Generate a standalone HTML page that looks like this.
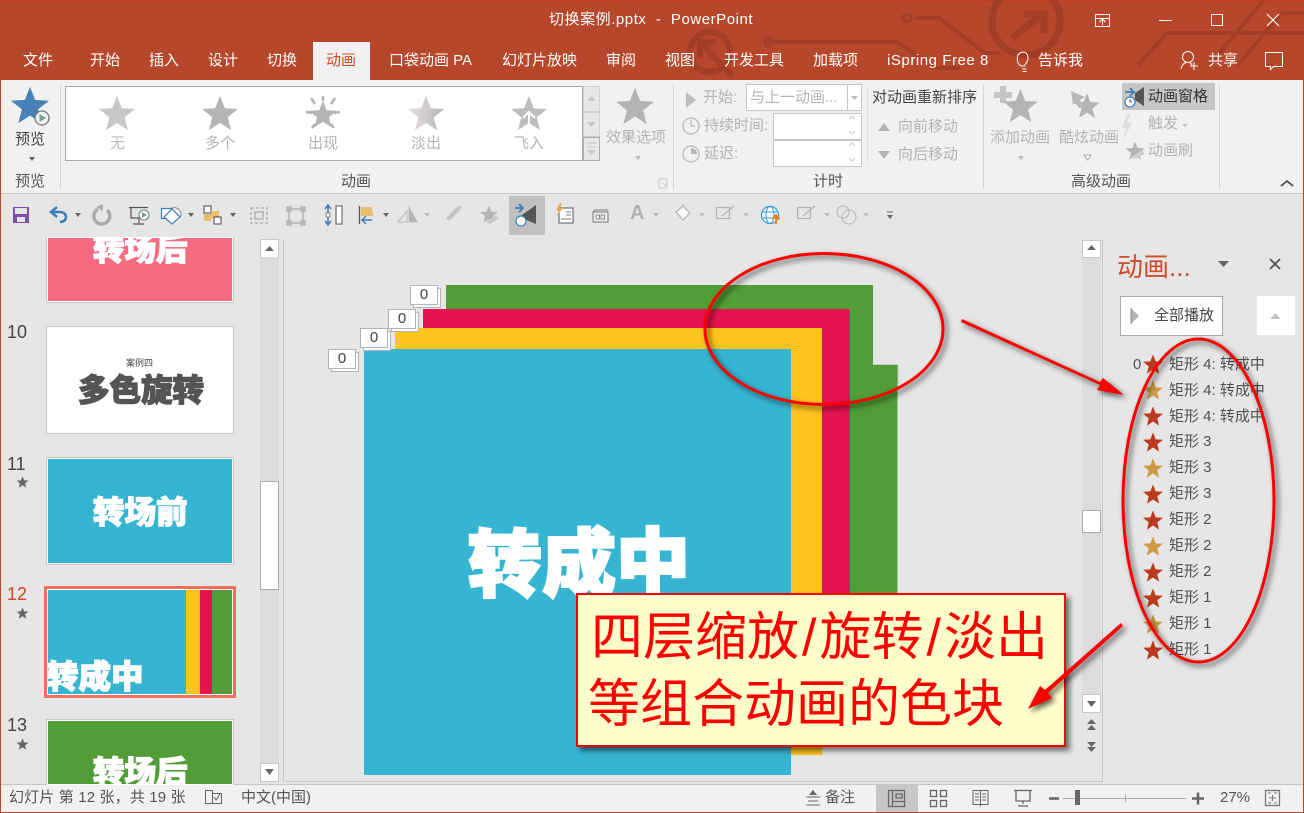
<!DOCTYPE html>
<html lang="zh"><head><meta charset="utf-8"><title>切换案例.pptx - PowerPoint</title>
<style>
html,body{margin:0;padding:0;width:1304px;height:813px;overflow:hidden;background:#E6E6E6}
body{position:relative;font-family:"Liberation Sans","Noto Sans CJK SC",sans-serif;color:#444}
.a{position:absolute}
.t{position:absolute;white-space:nowrap;line-height:20px;height:20px;font-size:15px;margin-top:1px}
.w{color:#fff}.g{color:#b3b3b3}.d{color:#555}
.h{position:absolute;white-space:nowrap;font-weight:900;text-align:center;-webkit-text-stroke:1.2px currentColor;color:#fff;font-size:31.500px;line-height:36px;height:36px;letter-spacing:0}
.th{position:absolute;box-sizing:border-box;left:46px;width:188px;border:1px solid #C6C6C6;overflow:hidden}
.num{position:absolute;left:7px;font-size:18px;line-height:20px;color:#444}
.zero{position:absolute;box-sizing:border-box;width:28px;height:20px;background:#fff;border:1px solid #B4B4B4;font-size:15px;line-height:17px;text-align:center;color:#444;box-shadow:3px 3px 0 -1px #fff,3px 3px 0 0 #B4B4B4}
.li{position:absolute;left:1169px;font-size:15px;line-height:20px;height:20px;color:#505050;white-space:nowrap;margin-top:1px}
.sl{margin:0 3px}
svg{position:absolute;left:0;top:0}
</style></head><body>
<!-- backgrounds -->
<div class="a" style="left:0;top:0;width:1304px;height:80px;background:#B7472A;border-top:1px solid #C8391A;box-sizing:border-box"></div>
<div class="a" style="left:0;top:80px;width:1304px;height:113px;background:#F1F1F1"></div>
<div class="a" style="left:0;top:193px;width:1304px;height:1px;background:#C6C6C6"></div>
<div class="a" style="left:313px;top:42px;width:57px;height:38px;background:#F1F1F1"></div>
<div class="a" style="left:65px;top:86px;width:518px;height:75px;box-sizing:border-box;background:#fff;border:1px solid #ABADB3"></div>
<div class="a" style="left:583px;top:86px;width:17px;height:26px;box-sizing:border-box;background:#E8E8E8;border:1px solid #D0D0D0"></div>
<div class="a" style="left:583px;top:112px;width:17px;height:25px;box-sizing:border-box;background:#E8E8E8;border:1px solid #D0D0D0"></div>
<div class="a" style="left:583px;top:137px;width:17px;height:24px;box-sizing:border-box;background:#E8E8E8;border:1px solid #ABADB3"></div>
<div class="a" style="left:746px;top:84px;width:116px;height:27px;box-sizing:border-box;background:#fff;border:1px solid #C6C6C6"></div>
<div class="a" style="left:847px;top:84px;width:1px;height:27px;background:#C6C6C6"></div>
<div class="a" style="left:773px;top:113px;width:89px;height:27px;box-sizing:border-box;background:#fff;border:1px solid #C6C6C6"></div>
<div class="a" style="left:773px;top:140px;width:89px;height:27px;box-sizing:border-box;background:#fff;border:1px solid #C6C6C6"></div>
<div class="a" style="left:1122px;top:83px;width:93px;height:27px;background:#C6C6C6"></div>
<div class="a" style="left:509px;top:196px;width:36px;height:39px;background:#C0C0C0"></div>
<div class="a" style="left:60px;top:84px;width:1px;height:105px;background:#D4D4D4"></div>
<div class="a" style="left:673px;top:84px;width:1px;height:105px;background:#D4D4D4"></div>
<div class="a" style="left:867px;top:88px;width:1px;height:74px;background:#DDD"></div>
<div class="a" style="left:983px;top:84px;width:1px;height:105px;background:#D4D4D4"></div>
<div class="a" style="left:1219px;top:84px;width:1px;height:105px;background:#D4D4D4"></div>
<!-- status bar -->
<div class="a" style="left:0;top:784px;width:1304px;height:1px;background:#C6C6C6"></div>
<div class="a" style="left:0;top:785px;width:1304px;height:27px;background:#F1F1F1"></div>
<div class="a" style="left:876px;top:785px;width:42px;height:27px;background:#C6C6C6"></div>
<div class="a" style="left:0;top:812px;width:1304px;height:1px;background:#B7472A"></div>
<div class="a" style="left:0;top:0;width:1px;height:813px;background:#B7472A"></div>
<div class="a" style="left:1303px;top:0;width:1px;height:813px;background:#B7472A"></div>

<!-- base svg icons -->
<svg width="1304" height="813" viewBox="0 0 1304 813">
<defs>
<symbol id="s" viewBox="0 0 24 24"><polygon points="12,0.5 15.2,8.8 24,9.3 17.1,14.8 19.4,23.5 12,18.6 4.6,23.5 6.9,14.8 0,9.3 8.8,8.8"/></symbol>
<linearGradient id="fade" x1="0" x2="1"><stop offset="0" stop-color="#E4DEDE"/><stop offset=".55" stop-color="#CFCACC"/><stop offset="1" stop-color="#B0B0B0"/></linearGradient>
</defs>
<!-- title-bar pattern -->
<g fill="none" stroke="#A23E25" stroke-width="7">
<circle cx="1026" cy="21" r="34"/>
<path d="M1012 38L1041 15M1024 14H1044V33" stroke-width="7"/>
<circle cx="710" cy="52" r="20" stroke-width="6"/>
<path d="M732 76L703 45M700 58V42H716" stroke-width="6"/>
<path d="M915 18H939L985 53H1000M768 42H897L935 68H960" stroke-width="4"/>
<circle cx="907" cy="18" r="4" stroke-width="3"/><circle cx="769" cy="42" r="4" stroke-width="3"/>
<path d="M1138 65L1167 33H1304M1209 65L1264 0M1238 65L1282 13H1304" stroke-width="4"/>
</g>
<!-- window controls -->
<g fill="none" stroke="#fff" stroke-width="1">
<path d="M1095.500 14.500h14v12h-14zM1095 18.500h15M1102.500 25v-6M1099.500 22l3-3 3 3"/>
<path d="M1159 20.500h13M1211.500 14.500h11v11h-11zM1267 14l12 12M1279 14l-12 12"/>
<path d="M1024.500 63c-5-3-5-12 0-13.500s7 2 7 6-3 5-3.500 7.500h-3.500zM1026 66h4M1026 68.500h4" transform="translate(-3.500 3) "/>
<circle cx="1188" cy="57" r="5.500"/><path d="M1181 69c1-4 3-6 5-6.500M1190 63c1 .5 1.500 1 2 2M1190 66h8M1194 62v8" />
<path d="M1265.500 52.500h17v14h-9l-3 3v-3h-5z"/>
</g>
<!-- preview -->
<use href="#s" x="11" y="86" width="38" height="38" fill="#4A80B8"/>
<circle cx="42" cy="118" r="7" fill="#F1F1F1" stroke="#777" stroke-width="1.300"/><polygon points="39.500,114 46,118 39.500,122" fill="#6FA58C"/>
<polygon points="29,157 35,157 32,161" fill="#666"/>
<!-- gallery -->
<use href="#s" x="99" y="95" width="36" height="36" fill="#C8C8C8"/>
<use href="#s" x="202" y="95" width="36" height="36" fill="#B4B4B4"/>
<use href="#s" x="309" y="100" width="28" height="28" fill="#B4B4B4"/>
<path d="M323 96v5M311 98l4 6M335 98l-4 6M306 112l6 1M340 112l-6 1M312 128l3-4M334 128l-3-4" stroke="#B4B4B4" stroke-width="2.500" fill="none"/>
<use href="#s" x="408" y="95" width="36" height="36" fill="url(#fade)"/>
<use href="#s" x="511" y="95" width="36" height="36" fill="#BDBDBD"/>
<path d="M529 131v-19M523 118l6-6 6 6M524 132v-6M534 132v-6" stroke="#fff" stroke-width="2" fill="none"/>
<polygon points="587,101 596,101 591.500,96" fill="#C6C6C6"/><polygon points="587,122 596,122 591.500,127" fill="#C6C6C6"/>
<path d="M587 143h9M587 147h9" stroke="#C6C6C6"/><polygon points="587,150 596,150 591.500,155" fill="#C6C6C6"/>
<use href="#s" x="616" y="87" width="38" height="38" fill="#B4B4B4"/>
<polygon points="635,156 641,156 638,160" fill="#bbb"/>
<!-- timing -->
<polygon points="686,92 696,100 686,108" fill="#BDBDBD"/>
<polygon points="851,96 858,96 854.500,100" fill="#bbb"/>
<g fill="none" stroke="#B8B8B8" stroke-width="1.300"><circle cx="691" cy="126" r="8"/><path d="M691 120v6h4"/><circle cx="691" cy="154" r="8"/></g>
<path d="M691 154v-6a6 6 0 0 1 6 6z" fill="#B8B8B8"/>
<path d="M849 119l3-3 3 3M849 131l3 3 3-3M849 146l3-3 3 3M849 158l3 3 3-3" fill="none" stroke="#ccc"/>
<polygon points="878,131 890,131 884,123" fill="#B4B4B4"/><polygon points="878,151 890,151 884,159" fill="#B4B4B4"/>
<path d="M659 179h8v8M659 180v8h8M663 183l4 4" fill="none" stroke="#C4C4C4"/>
<!-- advanced -->
<path d="M1000 86h6v6h6v6h-6v5h-6v-5h-6v-6h6z" fill="#C6C6C6"/>
<use href="#s" x="1003" y="88" width="35" height="35" fill="#B4B4B4"/>
<use href="#s" x="1074" y="91" width="26" height="29" fill="#B4B4B4"/>
<polygon points="1071,91 1085,97 1080,100 1083,107 1079,108 1076,102 1073,105" fill="#B8B8B8"/>
<polygon points="1018,156 1024,156 1021,160" fill="#bbb"/>
<polygon points="1084,155 1091,155 1087.500,160" fill="#fff" stroke="#999" stroke-width=".8"/>
<path d="M1127 114l-5 14h4l-3 12 9-17h-5l4-9z" fill="#DEDEDE"/>
<polygon points="1182,124 1188,124 1185,127" fill="#bbb"/>
<use href="#s" x="1125" y="141" width="20" height="19" fill="#B4B4B4"/>
<path d="M1130 158l12-8 3 4-11 5z" fill="#D0D0D0"/>
<path d="M1281 186l6-5 6 5" fill="none" stroke="#555" stroke-width="1.800"/>
<!-- anim pane icon ribbon -->
<polygon points="1135,93 1144,87 1144,106 1135,100" fill="#555"/>
<path d="M1125 92h8M1130 88l4 4-4 4" stroke="#3F7CB8" stroke-width="1.800" fill="none"/>
<circle cx="1130" cy="102" r="5" fill="#fff" stroke="#3F7CB8" stroke-width="1.200"/><path d="M1130 99v3h2" stroke="#333" fill="none" stroke-width=".8"/>
<!-- toolbar -->
<rect x="13" y="207" width="16" height="16" fill="#7B50A8"/><rect x="15" y="208" width="12" height="6" fill="#E6E6E6"/><rect x="17" y="217" width="8" height="5" fill="#E6E6E6"/>
<path d="M51 212H60C68 212 68 222 60 222M57 207l-6 5 6 5" fill="none" stroke="#3F7CB8" stroke-width="2.500"/>
<g fill="#666"><polygon points="75,213 81,213 78,217"/><polygon points="188,213 194,213 191,217"/><polygon points="230,213 236,213 233,217"/><polygon points="383,213 389,213 386,217"/></g>
<g fill="#bbb"><polygon points="424,213 430,213 427,217"/><polygon points="653,213 659,213 656,217"/><polygon points="699,213 705,213 702,217"/><polygon points="743,213 749,213 746,217"/><polygon points="824,213 830,213 827,217"/><polygon points="863,213 869,213 866,217"/></g>
<path d="M98 209A8 8 0 1 0 107 210" fill="none" stroke="#ABABAB" stroke-width="3.500"/><polygon points="96,207 103,204 103,211" fill="#ABABAB"/>
<path d="M129 207.500h19M131 208v10h14M139 218v5M133 224h11" fill="none" stroke="#555" stroke-width="1.200"/><circle cx="144" cy="215" r="5" fill="#fff" stroke="#777"/><polygon points="142,212 147,215 142,218" fill="#6FA58C"/>
<rect x="161.500" y="208.500" width="11" height="10" fill="#fff" stroke="#3F7CB8" stroke-width="1.200"/>
<path d="M172 208a7 7 0 0 1 9 8l-4 1z" fill="#F1F1F1" stroke="#888"/>
<path d="M172 209l8 8-8 7-8-7z" fill="#fff" stroke="#3F7CB8" stroke-width="1.200"/>
<rect x="204" y="206" width="7" height="7" fill="#fff" stroke="#444"/><rect x="211" y="211" width="8" height="7" fill="#E9BD6E"/><rect x="204" y="214" width="7" height="7" fill="#E9BD6E"/><rect x="214" y="217" width="7" height="7" fill="#fff" stroke="#444"/>
<g fill="none" stroke="#B4B4B4" stroke-width="1.500"><rect x="251" y="208" width="16" height="15" stroke-dasharray="3 2"/><rect x="255" y="212" width="8" height="7"/></g>
<g fill="none" stroke="#B4B4B4" stroke-width="1.500"><rect x="289" y="209" width="14" height="14"/><rect x="287" y="207" width="4" height="4" fill="#B4B4B4"/><rect x="301" y="207" width="4" height="4" fill="#B4B4B4"/><rect x="287" y="221" width="4" height="4" fill="#B4B4B4"/><rect x="301" y="221" width="4" height="4" fill="#B4B4B4"/></g>
<rect x="336" y="206" width="6" height="18" fill="#fff" stroke="#555"/><path d="M328 206v18M325 209l3-4 3 4M325 221l3 4 3-4" stroke="#3F7CB8" stroke-width="1.500" fill="none"/><rect x="326" y="213" width="4" height="4" fill="#fff" stroke="#555" stroke-width=".7"/>
<path d="M359.500 206v18" stroke="#555" stroke-width="1.300"/><rect x="361" y="207" width="11" height="7" fill="#E9BD6E"/><rect x="361" y="211" width="12" height="5" fill="#E9BD6E"/><path d="M372 220h-10M366 216l-4 4 4 4" stroke="#3F7CB8" stroke-width="1.500" fill="none"/>
<path d="M398 222l9-11v11zM409 207v15h8z" fill="none" stroke="#bbb"/><polygon points="409,208 417,222 409,222" fill="#B4B4B4"/>
<path d="M446 218l10-10 3 3-10 10zM456 208l4-3 2 2-3 4" fill="#C4C4C4"/>
<use href="#s" x="480" y="205" width="18" height="18" fill="#B4B4B4"/><path d="M486 222l10-7 3 3-9 6z" fill="#C8C8C8"/>
<polygon points="522,215 536,205 536,224 522,218" fill="#555"/>
<path d="M515 208h8M519 204l4 4-4 4" stroke="#3F7CB8" stroke-width="1.800" fill="none"/>
<circle cx="521" cy="221" r="5" fill="#fff" stroke="#3F7CB8" stroke-width="1.200"/>
<rect x="559" y="208" width="14" height="15" fill="#fff" stroke="#555"/><path d="M566 212h5M566 215h5M561 219h10" stroke="#777"/><path d="M560 203l-4 7h3l-2 6 6-8h-3l2-5z" fill="#E9A94A"/>
<path d="M593 212h15v10h-15zM593 212l2-2h13" fill="#EEE" stroke="#777"/><rect x="596" y="215" width="3.500" height="4" fill="none" stroke="#777" stroke-width=".8"/><rect x="601" y="215" width="3.500" height="4" fill="none" stroke="#777" stroke-width=".8"/>
<path d="M676 212l7-6 7 7-7 7zM683 206v-2" fill="#F6F6F6" stroke="#aaa"/>
<path d="M716.500 207.500h13v11h-13z M722 216l12-10" fill="none" stroke="#B4B4B4" stroke-width="1.300"/>
<circle cx="770" cy="215" r="8.500" fill="#fff" stroke="#2F9BD8" stroke-width="1.200"/><ellipse cx="770" cy="215" rx="4" ry="8.500" fill="none" stroke="#2F9BD8"/><path d="M762 212h16M762 218h16" stroke="#2F9BD8"/><path d="M776 224v-8M772.500 219l3.500-4 3.500 4" stroke="#F08020" stroke-width="2" fill="none"/>
<path d="M797.500 207.500h13v11h-13z M803 216l12-10" fill="none" stroke="#B4B4B4" stroke-width="1.300"/>
<circle cx="843" cy="212" r="6" fill="none" stroke="#B4B4B4"/><circle cx="849" cy="217" r="7" fill="none" stroke="#B4B4B4"/>
<path d="M887 212h6" stroke="#666"/><polygon points="887,215 893,215 890,219" fill="#666"/>
<!-- left scrollbar + slide frame -->
<rect x="260" y="240" width="19" height="541" fill="#DCDCDC"/>
<rect x="260.500" y="239.500" width="18" height="18.500" fill="#fff" stroke="#C6C6C6"/>
<polygon points="265,251 274,251 269.500,246" fill="#666"/>
<rect x="260.500" y="481.500" width="18" height="108" fill="#fff" stroke="#ABABAB"/>
<rect x="260.500" y="763.500" width="18" height="18" fill="#fff" stroke="#C6C6C6"/>
<polygon points="265,769 274,769 269.500,775" fill="#666"/>
<path d="M283.500 239V782M286 781.500H1102.500V240" fill="none" stroke="#C6C6C6"/>
<!-- right scrollbar -->
<rect x="1082" y="240" width="19" height="472" fill="#DCDCDC"/>
<rect x="1082.500" y="240.500" width="18" height="17" fill="#fff" stroke="#C6C6C6"/>
<polygon points="1087,250 1096,250 1091.500,245" fill="#666"/>
<rect x="1082.500" y="510.500" width="18" height="22" fill="#fff" stroke="#ABABAB"/>
<rect x="1082.500" y="694.500" width="18" height="18" fill="#fff" stroke="#C6C6C6"/>
<polygon points="1087,701 1096,701 1091.500,707" fill="#666"/>
<g fill="#666"><polygon points="1087,724 1096,724 1091.500,719"/><polygon points="1087,730 1096,730 1091.500,725"/><polygon points="1087,742 1096,742 1091.500,747"/><polygon points="1087,747 1096,747 1091.500,752"/></g>
<!-- slide -->
<rect x="446" y="285" width="427" height="80" fill="#529D37"/>
<rect x="800" y="365" width="97.500" height="382" fill="#529D37"/>
<path d="M873 364.500h25v20" stroke="#C8C8C8" fill="none"/>
<rect x="423" y="309" width="427" height="438" fill="#E61351"/>
<rect x="395" y="328" width="427" height="427" fill="#FEC41E"/>
<rect x="364" y="349" width="427" height="426" fill="#36B5D3"/>
<!-- panel -->
<polygon points="1218,261 1229,261 1223.500,267" fill="#666"/>
<path d="M1270 259l10 10M1280 259l-10 10" stroke="#555" stroke-width="1.800"/>
<rect x="1120.500" y="296.500" width="102" height="39" fill="#fff" stroke="#ABABAB"/>
<polygon points="1131,308 1139,316 1131,324" fill="#B4B4B4"/><path d="M1131 308v16" stroke="#888"/>
<rect x="1257" y="296" width="38" height="39" fill="#fff"/>
<polygon points="1270,319 1281,319 1275.500,313" fill="#C6C6C6"/>
<g>
<use href="#s" x="1143" y="354" width="20" height="20" fill="#B93A1C"/>
<use href="#s" x="1143" y="380" width="20" height="20" fill="#D09A45"/>
<use href="#s" x="1143" y="406" width="20" height="20" fill="#B93A1C"/>
<use href="#s" x="1143" y="432" width="20" height="20" fill="#B93A1C"/>
<use href="#s" x="1143" y="458" width="20" height="20" fill="#D09A45"/>
<use href="#s" x="1143" y="484" width="20" height="20" fill="#B93A1C"/>
<use href="#s" x="1143" y="510" width="20" height="20" fill="#B93A1C"/>
<use href="#s" x="1143" y="536" width="20" height="20" fill="#D09A45"/>
<use href="#s" x="1143" y="562" width="20" height="20" fill="#B93A1C"/>
<use href="#s" x="1143" y="588" width="20" height="20" fill="#B93A1C"/>
<use href="#s" x="1143" y="614" width="20" height="20" fill="#D09A45"/>
<use href="#s" x="1143" y="640" width="20" height="20" fill="#B93A1C"/>
</g>
<!-- status icons -->
<path d="M205.500 790.500h7v13h-7zM212.500 793.500h9v10h-9M214 797l2 3 4-6" fill="none" stroke="#666"/>
<path d="M806 798h14M808 802h10M806 806h14" stroke="#666" fill="none" transform="translate(0 -1)"/><polygon points="809,795 817,795 813,790" fill="#666"/>
<g fill="none" stroke="#666" stroke-width="1.300">
<rect x="888.500" y="790.500" width="16" height="16"/><path d="M892.500 790.500v16M892.500 801.500h12M896 794h6v4h-6z"/>
<rect x="930.500" y="790.500" width="6" height="6"/><rect x="940.500" y="790.500" width="6" height="6"/><rect x="930.500" y="800.500" width="6" height="6"/><rect x="940.500" y="800.500" width="6" height="6"/>
<path d="M973 790.500h15v14h-15zM980.500 790.500v16M975 794h4M975 797h4M975 800h4M982 794h4M982 797h4M982 800h4" stroke-width="1"/>
<path d="M1014 790.500h18M1016 791v10h14v-10M1023 801v3M1018 806h10" />
<rect x="1265.500" y="790.500" width="14" height="15" stroke="#777"/>
</g>
<path d="M1268 793h3M1277 793h-3M1268 803h3M1277 803h-3M1272.500 795v6M1269 798h7" stroke="#777" fill="none"/>
<path d="M1049 798.500h10" stroke="#666" stroke-width="2.500"/>
<path d="M1063 798.500h123M1125.500 795v7" stroke="#A8A8A8" fill="none"/>
<rect x="1075" y="790" width="5" height="15" fill="#666"/>
<path d="M1192 798.500h12M1198 792.500v12" stroke="#666" stroke-width="2.500"/>
</svg>

<!-- title + tabs -->
<div class="t w" style="left:549px;top:9px;letter-spacing:.55px">切换案例.pptx&nbsp; -&nbsp; PowerPoint</div>
<div class="t w" style="left:23px;top:50px">文件</div>
<div class="t w" style="left:90px;top:50px">开始</div>
<div class="t w" style="left:149px;top:50px">插入</div>
<div class="t w" style="left:208px;top:50px">设计</div>
<div class="t w" style="left:267px;top:50px">切换</div>
<div class="t" style="left:326px;top:50px;color:#D24726">动画</div>
<div class="t w" style="left:389px;top:50px">口袋动画 PA</div>
<div class="t w" style="left:502px;top:50px">幻灯片放映</div>
<div class="t w" style="left:606px;top:50px">审阅</div>
<div class="t w" style="left:665px;top:50px">视图</div>
<div class="t w" style="left:724px;top:50px">开发工具</div>
<div class="t w" style="left:813px;top:50px">加载项</div>
<div class="t w" style="left:887px;top:50px;letter-spacing:.55px">iSpring Free 8</div>
<div class="t w" style="left:1038px;top:50px">告诉我</div>
<div class="t w" style="left:1208px;top:50px">共享</div>

<!-- ribbon text -->
<div class="t" style="left:15px;top:129px;color:#444">预览</div>
<div class="t d" style="left:15px;top:171px">预览</div>
<div class="t" style="left:110px;top:133px;color:#bdbdbd">无</div>
<div class="t g" style="left:205px;top:133px">多个</div>
<div class="t g" style="left:308px;top:133px">出现</div>
<div class="t g" style="left:411px;top:133px">淡出</div>
<div class="t g" style="left:514px;top:133px">飞入</div>
<div class="t g" style="left:606px;top:127px">效果选项</div>
<div class="t d" style="left:341px;top:171px">动画</div>
<div class="t g" style="left:703px;top:87px">开始:</div>
<div class="t g" style="left:750px;top:87px">与上一动画...</div>
<div class="t g" style="left:704px;top:115px">持续时间:</div>
<div class="t g" style="left:704px;top:143px">延迟:</div>
<div class="t" style="left:872px;top:87px;color:#444">对动画重新排序</div>
<div class="t g" style="left:898px;top:116px">向前移动</div>
<div class="t g" style="left:898px;top:144px">向后移动</div>
<div class="t d" style="left:813px;top:171px">计时</div>
<div class="t g" style="left:990px;top:127px">添加动画</div>
<div class="t g" style="left:1059px;top:127px">酷炫动画</div>
<div class="t" style="left:1148px;top:86px;color:#333">动画窗格</div>
<div class="t g" style="left:1148px;top:113px">触发</div>
<div class="t g" style="left:1148px;top:140px">动画刷</div>
<div class="t d" style="left:1071px;top:171px">高级动画</div>
<div class="a" style="left:630px;top:202px;font-size:20px;line-height:22px;color:#B0B0B0;font-weight:700">A</div>

<!-- thumbnails -->
<div class="th" style="top:237px;height:66px;border-top:0;background:#F56B80;box-shadow:inset 0 0 0 1px #fff"><div class="h" style="left:46px;top:-6px">转场后</div></div>
<div class="num" style="top:322px">10</div>
<div class="th" style="top:326px;height:108px;background:#fff">
 <div class="t" style="left:79px;top:25px;font-size:9px;color:#444">案例四</div>
 <div class="h" style="left:31px;top:45px;color:#555;-webkit-text-stroke-color:#555">多色旋转</div>
</div>
<div class="num" style="top:454px">11</div>
<div class="th" style="top:457px;height:108px;background:#36B5D3;box-shadow:inset 0 0 0 1px #fff"><div class="h" style="left:46px;top:36px">转场前</div></div>
<div class="num" style="top:584px;color:#D24726">12</div>
<div class="a" style="left:44px;top:586px;width:192px;height:112px;box-sizing:border-box;background:#F1705A"></div>
<div class="a" style="left:47px;top:589px;width:186px;height:106px;background:#fff;overflow:hidden">
 <div class="a" style="left:1px;top:1px;width:184px;height:104px;background:#36B5D3;overflow:hidden">
  <div class="a" style="left:138px;top:0;width:14px;height:104px;background:#FEC41E"></div>
  <div class="a" style="left:152px;top:0;width:12px;height:104px;background:#E61351"></div>
  <div class="a" style="left:164px;top:0;width:20px;height:104px;background:#529D37"></div>
  <div class="h" style="left:-2px;top:69px;font-size:32.500px">转成中</div>
 </div>
</div>
<div class="num" style="top:715px">13</div>
<div class="th" style="top:719px;height:66px;border-bottom:0;background:#529D37;box-shadow:inset 0 0 0 1px #fff"><div class="h" style="left:46px;top:34px">转场后</div></div>
<svg width="40" height="813" viewBox="0 0 40 813" style="width:40px">
<use href="#s" x="16" y="476" width="13" height="12" fill="#666"/>
<use href="#s" x="16" y="607" width="13" height="12" fill="#666"/>
<use href="#s" x="16" y="738" width="13" height="12" fill="#666"/>
</svg>

<!-- slide content -->
<div class="h" style="left:468px;top:517px;font-size:74px;line-height:96px;height:96px;-webkit-text-stroke-width:2.500px;width:222px;transform:rotate(-0.5deg)">转成中</div>
<div class="zero" style="left:410px;top:285px">0</div>
<div class="zero" style="left:388px;top:309px">0</div>
<div class="zero" style="left:360px;top:328px">0</div>
<div class="zero" style="left:328px;top:349px">0</div>

<!-- panel text -->
<div class="a" style="left:1117px;top:250px;font-size:26px;line-height:34px;color:#CF4B2B;white-space:nowrap">动画...</div>
<div class="t" style="left:1154px;top:305px;color:#444">全部播放</div>
<div class="t d" style="left:1133px;top:354px">0</div>
<div class="li" style="top:354px">矩形 4: 转成中</div>
<div class="li" style="top:380px">矩形 4: 转成中</div>
<div class="li" style="top:406px">矩形 4: 转成中</div>
<div class="li" style="top:431px">矩形 3</div>
<div class="li" style="top:457px">矩形 3</div>
<div class="li" style="top:483px">矩形 3</div>
<div class="li" style="top:509px">矩形 2</div>
<div class="li" style="top:535px">矩形 2</div>
<div class="li" style="top:561px">矩形 2</div>
<div class="li" style="top:587px">矩形 1</div>
<div class="li" style="top:613px">矩形 1</div>
<div class="li" style="top:639px">矩形 1</div>

<!-- status text -->
<div class="t d" style="left:9px;top:787px;letter-spacing:.15px">幻灯片 第 12 张，共 19 张</div>
<div class="t d" style="left:241px;top:787px">中文(中国)</div>
<div class="t d" style="left:825px;top:787px">备注</div>
<div class="t d" style="left:1220px;top:787px">27%</div>

<!-- callout -->
<div class="a" style="left:576px;top:593px;width:490px;height:154px;box-sizing:border-box;background:#FFFFCC;border:2px solid #F00;box-shadow:4px 4px 5px rgba(0,0,0,.5)"></div>
<div class="a" style="left:591px;top:605px;font-size:52px;line-height:67px;height:67px;color:#F00;white-space:nowrap">四层缩放<span class="sl">/</span>旋转<span class="sl">/</span>淡出</div>
<div class="a" style="left:588px;top:672px;font-size:52px;line-height:67px;height:67px;color:#F00;white-space:nowrap">等组合动画的色块</div>

<!-- annotations -->
<svg width="1304" height="813" viewBox="0 0 1304 813" style="filter:drop-shadow(3px 3px 3px rgba(0,0,0,.65))">
<ellipse cx="824" cy="329" rx="119" ry="75.500" fill="none" stroke="#F00" stroke-width="3"/>
<ellipse cx="1198.500" cy="500.500" rx="75.500" ry="161.500" fill="none" stroke="#F00" stroke-width="3"/>
<polygon points="962,319 1100,382 1103,378 1124,395 1097,390 1100,385 961,322" fill="#F00"/>
<polygon points="1121,623 1123,626 1048,693 1052,698 1028,709 1040,686 1045,690" fill="#F00"/>
</svg>
</body></html>
